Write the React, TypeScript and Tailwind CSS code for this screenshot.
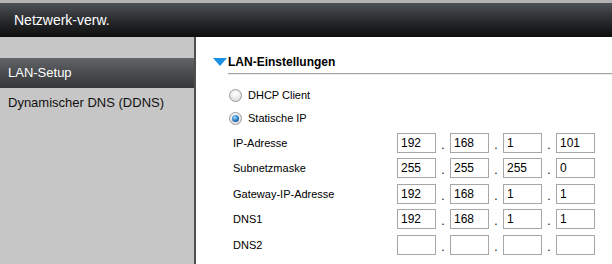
import React from 'react'

const rows: { label: string; values: string[] }[] = [
  { label: 'IP-Adresse', values: ['192', '168', '1', '101'] },
  { label: 'Subnetzmaske', values: ['255', '255', '255', '0'] },
  { label: 'Gateway-IP-Adresse', values: ['192', '168', '1', '1'] },
  { label: 'DNS1', values: ['192', '168', '1', '1'] },
  { label: 'DNS2', values: ['', '', '', ''] },
]

function Radio({ checked, label }: { checked?: boolean; label: string }) {
  return (
    <div className="flex items-center h-[23px]">
      <span className="flex h-[13px] w-[13px] items-center justify-center rounded-full border border-[#9a9a9a] bg-[radial-gradient(circle_at_50%_35%,#ffffff,#d6d6d6)]">
        {checked && (
          <span className="h-[7px] w-[7px] rounded-full bg-[radial-gradient(circle_at_40%_35%,#9fd8ff,#1d6fb8_60%,#123f6e)]" />
        )}
      </span>
      <span className="ml-[6px] text-[11px] text-black">{label}</span>
    </div>
  )
}

export default function App() {
  return (
    <div className="w-[612px] h-[264px] overflow-hidden bg-white font-['Liberation_Sans',Arial,sans-serif]">
      {/* top bar */}
      <div className="h-[37px] border-t-[3px] border-[#b3b3b3] bg-[linear-gradient(to_bottom,#4d5156,#26282a_55%,#0e0e0e)] flex items-center pl-[14px]">
        <span className="text-[14px] text-white">Netzwerk-verw.</span>
      </div>

      <div className="flex h-[227px]">
        {/* sidebar */}
        <aside className="w-[196px] shrink-0 bg-[#c6c6c6] border-r-2 border-[#4f4f4f] pt-[21px]">
          <div className="h-[30px] flex items-center pl-[8px] bg-[linear-gradient(to_bottom,#626568,#45474a_60%,#36383a)] text-[13px] text-white">
            LAN-Setup
          </div>
          <div className="h-[30px] flex items-center pl-[8px] text-[13px] text-[#111]">
            Dynamischer DNS (DDNS)
          </div>
        </aside>

        {/* content */}
        <main className="flex-1 pt-[18px] pl-[17px]">
          <div className="flex items-center h-[14px]">
            <svg width="14" height="8" viewBox="0 0 14 8" className="mr-[1px]">
              <polygon points="0,0 14,0 7,8" fill="#1a91e2" />
            </svg>
            <span className="text-[12px] font-bold text-black">LAN-Einstellungen</span>
          </div>
          <div className="ml-[15px] mt-[4px] h-[2px] border-t border-[#a3a3a3] bg-[#ececec]" />

          <div className="pl-[16px] pt-[9px]">
            <Radio label="DHCP Client" />
            <Radio checked label="Statische IP" />

            <div>
              {rows.map((r) => (
                <div key={r.label} className="flex items-center h-[25.5px] pl-[4px]">
                  <span className="w-[164px] text-[11px] text-black">{r.label}</span>
                  <div className="flex items-center">
                    {r.values.map((v, i) => (
                      <React.Fragment key={i}>
                        {i > 0 && (
                          <span className="w-[14px] self-end pb-[2px] text-center text-[12px] leading-none text-black">.</span>
                        )}
                        <div className="h-[20px] w-[39px] border border-[#a7a7a7] bg-white pl-[3px] text-[12px] leading-[18px] text-black">
                          {v}
                        </div>
                      </React.Fragment>
                    ))}
                  </div>
                </div>
              ))}
            </div>
          </div>
        </main>
      </div>
    </div>
  )
}
